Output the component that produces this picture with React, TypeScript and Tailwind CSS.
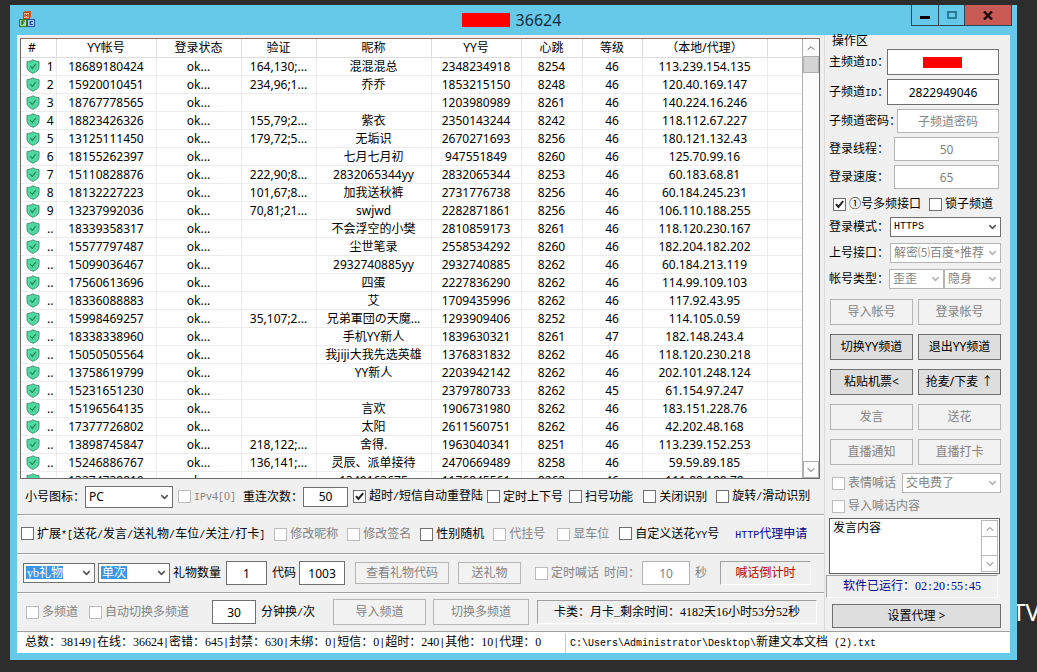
import type { InputHTMLAttributes, ReactNode, SelectHTMLAttributes } from 'react'
import { ChevronDown, ChevronUp } from 'lucide-react'
import clsx from 'clsx'

type Row = [string, string, string, string, string, string, string, string]

// no, account, verify, nickname, yy id, heartbeat, level, ip
const rows: Row[] = [
  ['1', '18689180424', '164,130;...', '混混混总', '2348234918', '8254', '46', '113.239.154.135'],
  ['2', '15920010451', '234,96;1...', '乔乔', '1853215150', '8248', '46', '120.40.169.147'],
  ['3', '18767778565', '', '', '1203980989', '8261', '46', '140.224.16.246'],
  ['4', '18823426326', '155,79;2...', '紫衣', '2350143244', '8242', '46', '118.112.67.227'],
  ['5', '13125111450', '179,72;5...', '无垢识', '2670271693', '8256', '46', '180.121.132.43'],
  ['6', '18155262397', '', '七月七月初', '947551849', '8260', '46', '125.70.99.16'],
  ['7', '15110828876', '222,90;8...', '2832065344yy', '2832065344', '8253', '46', '60.183.68.81'],
  ['8', '18132227223', '101,67;8...', '加我送秋裤', '2731776738', '8256', '46', '60.184.245.231'],
  ['9', '13237992036', '70,81;21...', 'swjwd', '2282871861', '8256', '46', '106.110.188.255'],
  ['..', '18339358317', '', '不会浮空的小樊', '2810859173', '8261', '46', '118.120.230.167'],
  ['..', '15577797487', '', '尘世笔录', '2558534292', '8260', '46', '182.204.182.202'],
  ['..', '15099036467', '', '2932740885yy', '2932740885', '8262', '46', '60.184.213.119'],
  ['..', '17560613696', '', '四蛋', '2227836290', '8262', '46', '114.99.109.103'],
  ['..', '18336088883', '', '艾', '1709435996', '8262', '46', '117.92.43.95'],
  ['..', '15998469257', '35,107;2...', '兄弟軍団の天魔...', '1293909406', '8252', '46', '114.105.0.59'],
  ['..', '18338338960', '', '手机YY新人', '1839630321', '8261', '47', '182.148.243.4'],
  ['..', '15050505564', '', '我jiji大我先选英雄', '1376831832', '8262', '46', '118.120.230.218'],
  ['..', '13758619799', '', 'YY新人', '2203942142', '8262', '46', '202.101.248.124'],
  ['..', '15231651230', '', '', '2379780733', '8262', '45', '61.154.97.247'],
  ['..', '15196564135', '', '言欢', '1906731980', '8262', '46', '183.151.228.76'],
  ['..', '17377726802', '', '太阳', '2611560751', '8262', '46', '42.202.48.168'],
  ['..', '13898745847', '218,122;...', '舍得.', '1963040341', '8251', '46', '113.239.152.253'],
  ['..', '15246886767', '136,141;...', '灵辰、派单接待', '2470669489', '8258', '46', '59.59.89.185'],
  ['..', '13374738810', '', '1349163675', '1176845561', '8262', '46', '111.88.188.78'],
]

const headers = ['YY帐号', '登录状态', '验证', '昵称', 'YY号', '心跳', '等级', '（本地/代理）', '']

// Latin letters and marks take half the width of a Chinese character
function Half({ children }: { children: string }) {
  return (
    <>
      {children.split(/([\x20-\x2f\x3a-\x7e]+)/).map((part, i) =>
        i % 2 ? (
          <span key={i} className="whitespace-pre font-['Liberation_Mono'] text-[10px]">
            {part}
          </span>
        ) : (
          part
        ),
      )}
    </>
  )
}

function Check({ label, className, ...props }: { label: string } & InputHTMLAttributes<HTMLInputElement>) {
  return (
    <label
      className={clsx('flex shrink-0 items-center gap-[3px] whitespace-nowrap', props.disabled && 'text-[#838383]', className)}
    >
      <span className="relative size-[13px]">
        <input
          type="checkbox"
          className="peer block size-[13px] appearance-none border border-[#707070] bg-white disabled:border-[#bcbcbc]"
          {...props}
        />
        <svg viewBox="0 0 13 13" className="pointer-events-none absolute inset-0 hidden peer-checked:block" fill="none" stroke="#222" strokeWidth="2">
          <path d="M3 6.2 5.4 9 10.2 3.2" />
        </svg>
      </span>
      <span>
        <Half>{label}</Half>
      </span>
    </label>
  )
}

function Combo({ value, className, wrap, ...props }: { value: string; wrap: string } & SelectHTMLAttributes<HTMLSelectElement>) {
  return (
    <span className={clsx('relative shrink-0', wrap)}>
      <select
        className={clsx(
          'block size-full appearance-none border border-[#707070] pl-[3px] pr-4 outline-none disabled:border-[#b5b5b5] disabled:text-[#838383] disabled:opacity-100',
          className ?? 'bg-white',
        )}
        {...props}
      >
        <option>{value}</option>
      </select>
      <ChevronDown
        size={11}
        strokeWidth={3.5}
        className={clsx('pointer-events-none absolute right-[3px] top-1/2 -translate-y-1/2', props.disabled ? 'text-[#b5b5b5]' : 'text-[#555]')}
      />
    </span>
  )
}

function Field({ className, ...props }: InputHTMLAttributes<HTMLInputElement>) {
  return (
    <input
      type="text"
      className={clsx(
        "min-w-0 shrink-0 border border-[#707070] bg-white text-center font-['Noto_Sans','Noto_Sans_CJK_SC',sans-serif] text-black outline-none disabled:border-[#b5b5b5] disabled:text-[#838383]",
        className,
      )}
      {...props}
    />
  )
}

function Push({ children, disabled, className }: { children: string; disabled?: boolean; className?: string }) {
  return (
    <button
      type="button"
      disabled={disabled}
      className={clsx(
        "shrink-0 whitespace-nowrap border font-['Noto_Sans','Noto_Sans_CJK_SC',sans-serif]",
        disabled ? 'border-[#b5b5b5] bg-[#f2f2f2] text-[#838383]' : 'border-[#707070] bg-[#dedede]',
        className,
      )}
    >
      {children}
    </button>
  )
}

function Strip({ children }: { children: ReactNode }) {
  return <div className="flex h-[39px] shrink-0 items-center border-t border-[#a0a0a0] shadow-[inset_0_1px_0_#fff]">{children}</div>
}

function Shield() {
  return (
    <svg width="14" height="15" viewBox="0 0 14 15" fill="none">
      <path d="M7 .8C5.2 2 3.2 2.5 1 2.6v5.2c0 3.2 2.6 5.2 6 6.5 3.4-1.3 6-3.3 6-6.5V2.6C10.8 2.5 8.8 2 7 .8z" fill="#4fd8a2" stroke="#4b8f74" />
      <path d="M4.2 7.2 6.3 9.4 9.8 5.2" stroke="#26805c" strokeWidth="1.2" />
    </svg>
  )
}

function BlocksIcon() {
  return (
    <svg width="16" height="16" viewBox="0 0 16 16">
      <path d="M4.5 1 6 0h6v6l-1.5 1.5h-6z" fill="#c4622d" />
      <rect x="4.5" y="1.5" width="6" height="6" fill="#f6b98a" stroke="#b34a1c" />
      <path d="M6 6V3.3l1.500 1.500L9 3.300V6" fill="none" stroke="#c01818" />
      <rect x=".5" y="8.5" width="7" height="7" fill="#a9dba0" stroke="#2f7d32" />
      <path d="M3 14v-4h3M3 12h2" fill="none" stroke="#14581a" strokeWidth="1.2" />
      <rect x="8.5" y="8.5" width="7" height="7" fill="#a9c8f5" stroke="#2c57a8" />
      <path d="M13.8 10.500h-2.500v3h2.500" fill="none" stroke="#173f9a" strokeWidth="1.2" />
    </svg>
  )
}

function TitleBar() {
  return (
    <header className="relative flex h-[30px] shrink-0 items-start justify-between">
      <span className="ml-[2px] mt-[6px]">
        <BlocksIcon />
      </span>
      <h1 className="absolute inset-x-0 top-0 flex h-[30px] items-center justify-center gap-[6px] pr-1 text-base font-normal text-[#14303c]">
        <span className="h-[14px] w-12 bg-[#fe0000]" />
        36624
      </h1>
      <div className="relative mr-[-2px] flex h-[21px] border-x border-b border-[#24485a]">
        <button type="button" aria-label="最小化" className="flex w-[27px] items-center justify-center border-r border-[#24485a]">
          <span className="mt-1 h-[3px] w-[10px] bg-black" />
        </button>
        <button type="button" aria-label="最大化" className="flex w-[26px] items-center justify-center border-r border-[#24485a]">
          <span className="h-2 w-[10px] border-2 border-[#2a7c98]" />
        </button>
        <button type="button" aria-label="关闭" className="flex w-[46px] items-center justify-center bg-[#c75a52]">
          <svg width="10" height="9" viewBox="0 0 10 9" stroke="#160c0c" strokeWidth="2.4">
            <path d="M1 .5 9 8.5M9 .5 1 8.5" />
          </svg>
        </button>
      </div>
    </header>
  )
}

function AccountList() {
  return (
    <div className="ml-[3px] mr-1 mt-[3px] flex min-h-0 flex-1 border border-[#6b6b6b] border-t-[#9a6a6a] bg-white">
      <div className="min-w-0 flex-1 overflow-hidden">
        <table className="w-full table-fixed border-collapse text-center">
          <colgroup>
            <col className="w-[35px]" />
            <col className="w-[100px]" />
            <col className="w-[85px]" />
            <col className="w-[75px]" />
            <col className="w-[115px]" />
            <col className="w-[90px]" />
            <col className="w-[61px]" />
            <col className="w-[60px]" />
            <col className="w-[125px]" />
            <col />
          </colgroup>
          <thead>
            <tr className="h-[18px]">
              <th className="border-b border-r border-[#dcdcdc] p-0 pl-[7px] pt-px text-left font-normal">#</th>
              {headers.map((h) => (
                <th key={h} className="overflow-hidden whitespace-nowrap border-b border-r border-[#dcdcdc] p-0 pt-px font-normal last:border-r-0">
                  {h}
                </th>
              ))}
            </tr>
          </thead>
          <tbody>
            {rows.map(([no, account, ...rest]) => (
              <tr key={account} className="h-[18px]">
                <td className="border-b border-r border-[#ececec] p-0 pt-px">
                  <div className="flex items-center justify-between pl-[5px] pr-[2px]">
                    <Shield />
                    <span>{no}</span>
                  </div>
                </td>
                {[account, 'ok...', ...rest, ''].map((cell, i) => (
                  <td key={i} className="whitespace-nowrap border-b border-r border-[#ececec] p-0 pt-px last:border-r-0">
                    {cell}
                  </td>
                ))}
              </tr>
            ))}
          </tbody>
        </table>
      </div>
      <div className="flex w-[17px] shrink-0 flex-col border-l border-[#b0b0b0] bg-[#fcfcfc] text-[#606060]">
        <button type="button" aria-label="向上滚动" className="flex h-[17px] items-center justify-center">
          <ChevronUp size={12} strokeWidth={2} />
        </button>
        <div className="h-[17px] border border-[#b0b0b0] bg-[#d4d4d4]" />
        <button type="button" aria-label="向下滚动" className="mt-auto flex h-[17px] items-center justify-center border border-[#b0b0b0]">
          <ChevronDown size={12} strokeWidth={2} />
        </button>
      </div>
    </div>
  )
}

function BottomStrips() {
  return (
    <>
      <div className="flex h-[35px] shrink-0 items-center pl-2">
        <label htmlFor="icon-type" className="w-[60px]">小号图标：</label>
        <Combo id="icon-type" value="PC" wrap="w-[88px] h-[22px]" className="bg-white font-['Noto_Sans']" />
        <Check label="IPv4[0]" disabled className="ml-[5px]" />
        <label htmlFor="retry" className="ml-[7px] w-[60px]">重连次数：</label>
        <Field id="retry" defaultValue="50" className="h-5 w-[45px]" />
        <Check label="超时/短信自动重登陆" defaultChecked className="ml-[5px]" />
        <Check label="定时上下号" className="ml-1" />
        <Check label="扫号功能" className="ml-[6px]" />
        <Check label="关闭识别" className="ml-[10px]" />
        <Check label="旋转/滑动识别" className="ml-[9px]" />
      </div>
      <Strip>
        <Check label="扩展*[送花/发言/送礼物/车位/关注/打卡]" className="ml-1" />
        <Check label="修改昵称" disabled className="ml-[9px]" />
        <Check label="修改签名" disabled className="ml-[9px]" />
        <Check label="性别随机" className="ml-[9px]" />
        <Check label="代挂号" disabled className="ml-[9px]" />
        <Check label="显车位" disabled className="ml-[12px]" />
        <Check label="自定义送花YY号" className="ml-[10px]" />
        <a href="#" className="ml-4 whitespace-nowrap text-[#00008b]">
          <Half>HTTP代理申请</Half>
        </a>
      </Strip>
      <Strip>
        <Combo
          aria-label="礼物类型"
          value="yb礼物"
          wrap="ml-[6px] w-[72px] h-5"
          className="bg-white bg-[linear-gradient(#3a96e8,#3a96e8)] bg-[length:37px_13px] bg-[position:2px_2px] bg-no-repeat text-white"
        />
        <Combo
          aria-label="赠送方式"
          value="单次"
          wrap="ml-[3px] w-[72px] h-5"
          className="bg-white bg-[linear-gradient(#3a96e8,#3a96e8)] bg-[length:26px_13px] bg-[position:2px_2px] bg-no-repeat text-white"
        />
        <label htmlFor="gift-count" className="ml-[3px]">礼物数量</label>
        <Field id="gift-count" defaultValue="1" className="ml-[5px] h-6 w-[41px]" />
        <label htmlFor="gift-code" className="ml-[5px]">代码</label>
        <Field id="gift-code" defaultValue="1003" className="ml-[3px] h-6 w-[46px]" />
        <Push disabled className="ml-[10px] h-[22px] w-[94px]">查看礼物代码</Push>
        <Push disabled className="ml-[9px] h-[22px] w-[63px]">送礼物</Push>
        <Check label="定时喊话" disabled className="ml-[14px]" />
        <label htmlFor="shout-time" className="ml-[5px] w-[38px] whitespace-nowrap text-[#838383]">时间：</label>
        <Field id="shout-time" defaultValue="10" disabled className="h-6 w-12" />
        <span className="ml-[5px] text-[#838383]">秒</span>
        <span className="ml-[13px] flex h-6 w-[91px] items-center justify-center border border-[#fff] border-l-[#a0a0a0] border-t-[#a0a0a0] text-[#b80000]">
          喊话倒计时
        </span>
      </Strip>
      <Strip>
        <Check label="多频道" disabled className="ml-[9px]" />
        <Check label="自动切换多频道" disabled className="ml-[11px]" />
        <Field id="switch-min" defaultValue="30" className="ml-[23px] h-6 w-11" />
        <label htmlFor="switch-min" className="ml-[5px] w-[54px] whitespace-nowrap">
          <Half>分钟换/次</Half>
        </label>
        <Push disabled className="ml-[18px] h-[26px] w-[93px]">导入频道</Push>
        <Push disabled className="ml-[7px] h-[26px] w-[96px]">切换多频道</Push>
        <span className="ml-2 mr-[7px] flex h-6 flex-1 items-center justify-center whitespace-nowrap border border-[#fff] border-l-[#a0a0a0] border-t-[#a0a0a0]">
          <span>
            <Half>卡类：月卡_剩余时间：4182天16小时53分52秒</Half>
          </span>
        </span>
      </Strip>
    </>
  )
}

function PanelRow({ label, id, children }: { label: string; id: string; children: ReactNode }) {
  return (
    <div className="flex items-center">
      <label htmlFor={id} className="w-0 flex-1 whitespace-nowrap">
        <Half>{label}</Half>
      </label>
      {children}
    </div>
  )
}

function Operations() {
  return (
    <section className="flex w-[186px] shrink-0 flex-col border-l border-[#dcdcdc] pl-1 pr-[9px]">
      <h2 className="h-[13px] pl-[3px] font-normal leading-[13px]">操作区</h2>
      <div className="mt-px flex flex-col gap-1 pr-[2px]">
        <PanelRow label="主频道ID：" id="main-id">
          <span className="relative flex">
            <Field id="main-id" className="h-[26px] w-28" />
            <span className="absolute left-9 top-2 h-[11px] w-[39px] bg-[#fe0000]" />
          </span>
        </PanelRow>
        <PanelRow label="子频道ID：" id="sub-id">
          <Field id="sub-id" defaultValue="2822949046" className="h-[26px] w-28" />
        </PanelRow>
        <PanelRow label="子频道密码：" id="sub-pass">
          <Field id="sub-pass" defaultValue="子频道密码" disabled className="h-6 w-[102px]" />
        </PanelRow>
        <PanelRow label="登录线程：" id="threads">
          <Field id="threads" defaultValue="50" disabled className="h-6 w-[105px]" />
        </PanelRow>
        <PanelRow label="登录速度：" id="speed">
          <Field id="speed" defaultValue="65" disabled className="h-6 w-[105px]" />
        </PanelRow>
      </div>

      <div className="mt-2 flex h-[14px] items-center gap-2 pl-1">
        <Check label="①号多频接口" defaultChecked />
        <Check label="锁子频道" />
      </div>

      <div className="mt-[6px] flex flex-col gap-[6px]">
        <PanelRow label="登录模式：" id="mode">
          <Combo id="mode" value="HTTPS" wrap="w-[111px] h-5" className="bg-white font-['Liberation_Mono'] text-[10px]" />
        </PanelRow>
        <PanelRow label="上号接口：" id="api">
          <Combo id="api" value="解密⑸百度*推荐" disabled wrap="w-[111px] h-5" />
        </PanelRow>
        <PanelRow label="帐号类型：" id="kind">
          <Combo id="kind" value="歪歪" disabled wrap="w-[55px] h-5" />
          <Combo aria-label="在线状态" value="隐身" disabled wrap="w-[57px] h-5" />
        </PanelRow>
      </div>

      <div className="mt-[10px] grid grid-cols-2 gap-x-[5px] gap-y-[9px] pl-px">
        <Push disabled className="h-[26px]">导入帐号</Push>
        <Push disabled className="h-[26px]">登录帐号</Push>
        <Push className="h-[26px]">切换YY频道</Push>
        <Push className="h-[26px]">退出YY频道</Push>
        <Push className="h-[26px]">{'粘贴机票<'}</Push>
        <Push className="h-[26px]">抢麦/下麦 ↑</Push>
        <Push disabled className="h-[26px]">发言</Push>
        <Push disabled className="h-[26px]">送花</Push>
        <Push disabled className="h-[26px]">直播通知</Push>
        <Push disabled className="h-[26px]">直播打卡</Push>
      </div>

      <div className="mt-2 flex items-center justify-between pl-[3px]">
        <Check label="表情喊话" disabled />
        <Combo aria-label="表情" value="交电费了" disabled wrap="w-[99px] h-5" />
      </div>
      <Check label="导入喊话内容" disabled className="ml-[3px] mt-[6px] h-[14px]" />

      <div className="mr-px mt-[5px] flex h-14 shrink-0 border border-[#606060] bg-white">
        <textarea
          aria-label="发言内容"
          defaultValue="发言内容"
          className="min-w-0 flex-1 resize-none overflow-hidden px-[3px] py-px leading-4 outline-none"
        />
        <div className="m-px flex w-[17px] flex-col justify-between border border-[#b8b8b8] text-[#707070]">
          <button type="button" aria-label="向上滚动" className="flex h-4 items-center justify-center border-b border-[#b8b8b8]">
            <ChevronUp size={12} />
          </button>
          <button type="button" aria-label="向下滚动" className="flex h-4 items-center justify-center border-t border-[#b8b8b8]">
            <ChevronDown size={12} />
          </button>
        </div>
      </div>

      <div className="ml-[-3px] mr-[3px] mt-px flex h-[23px] shrink-0 items-center justify-center border border-[#fff] border-l-[#a0a0a0] border-t-[#a0a0a0] text-[#00008b]">
        <span>
          <Half>软件已运行：02:20:55:45</Half>
        </span>
      </div>
      <Push className="ml-[3px] mt-[6px] h-6">{'设置代理 >'}</Push>
    </section>
  )
}

export default function App() {
  return (
    <div className="relative flex h-screen overflow-hidden bg-[#2d2d2d] pb-3 pl-[10px] pr-5 pt-[5px] font-['Noto_Sans','Noto_Sans_CJK_SC',sans-serif] text-xs text-black">
      <span className="absolute right-[-3px] top-[596px] text-2xl text-white">TV</span>
      <main className="relative flex min-w-0 flex-1 flex-col bg-[#66c9ea] px-[7px] pb-[7px]">
        <TitleBar />
        <div className="flex min-h-0 flex-1 bg-[#f0f0f0]">
          <div className="flex min-w-0 flex-1 flex-col">
            <AccountList />
            <div className="shrink-0 font-['Liberation_Serif','Noto_Sans_CJK_SC',serif]">
              <BottomStrips />
            </div>
          </div>
          <div className="flex font-['Liberation_Serif','Noto_Sans_CJK_SC',serif]">
            <Operations />
          </div>
        </div>
        <footer className="flex h-[22px] shrink-0 items-center border-t border-[#a0a0a0] bg-white font-['Liberation_Serif','Noto_Sans_CJK_SC',serif] leading-[18px]">
          <span className="w-[549px] whitespace-nowrap border-r border-[#c8c8c8] pl-2">
            <Half>总数：38149|在线：36624|密错：645|封禁：630|未绑：0|短信：0|超时：240|其他：10|代理：0</Half>
          </span>
          <span className="whitespace-nowrap pl-1">
            <Half>{'C:\\Users\\Administrator\\Desktop\\新建文本文档 (2).txt'}</Half>
          </span>
        </footer>
      </main>
    </div>
  )
}
